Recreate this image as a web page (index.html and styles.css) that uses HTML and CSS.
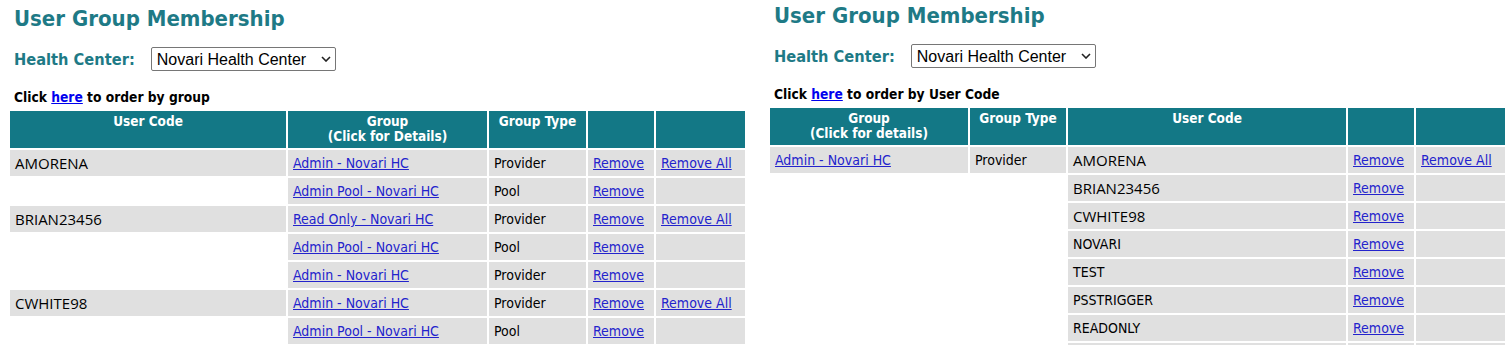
FILE: index.html
```html
<!DOCTYPE html>
<html lang="en">

<head>
    <meta charset="UTF-8">
    <title>User Group Membership</title>
    <link rel="stylesheet" href="styles.css">
</head>

<body>
    <div class="panels">
        <!-- ordered by user code -->
        <div class="panel panel-by-user">
            <h1>User Group Membership</h1>
            <div class="center-row">
                <label for="hc1">Health Center:</label>
                <span class="select-wrap">
                    <select id="hc1">
                        <option>Novari Health Center</option>
                    </select>
                    <svg class="chevron" width="10" height="6" viewBox="0 0 10 6"><path d="M1 1l4 4 4-4" fill="none" stroke="#222" stroke-width="1.6"/></svg>
                </span>
            </div>
            <p class="order-by">Click <a href="#">here</a> to order by group</p>
            <table class="members">
                <colgroup>
                    <col style="width: 276px">
                    <col style="width: 199px">
                    <col style="width: 97px">
                    <col style="width: 66px">
                    <col style="width: 89px">
                </colgroup>
                <tr>
                    <th>User Code</th>
                    <th>Group<br>(Click for Details)</th>
                    <th>Group Type</th>
                    <th></th>
                    <th></th>
                </tr>
                <tr>
                    <td class="code">AMORENA</td>
                    <td><a href="#">Admin - Novari HC</a></td>
                    <td>Provider</td>
                    <td><a href="#">Remove</a></td>
                    <td><a href="#">Remove All</a></td>
                </tr>
                <tr>
                    <td class="empty"></td>
                    <td><a href="#">Admin Pool - Novari HC</a></td>
                    <td>Pool</td>
                    <td><a href="#">Remove</a></td>
                    <td></td>
                </tr>
                <tr>
                    <td class="code">BRIAN23456</td>
                    <td><a href="#">Read Only - Novari HC</a></td>
                    <td>Provider</td>
                    <td><a href="#">Remove</a></td>
                    <td><a href="#">Remove All</a></td>
                </tr>
                <tr>
                    <td class="empty"></td>
                    <td><a href="#">Admin Pool - Novari HC</a></td>
                    <td>Pool</td>
                    <td><a href="#">Remove</a></td>
                    <td></td>
                </tr>
                <tr>
                    <td class="empty"></td>
                    <td><a href="#">Admin - Novari HC</a></td>
                    <td>Provider</td>
                    <td><a href="#">Remove</a></td>
                    <td></td>
                </tr>
                <tr>
                    <td class="code">CWHITE98</td>
                    <td><a href="#">Admin - Novari HC</a></td>
                    <td>Provider</td>
                    <td><a href="#">Remove</a></td>
                    <td><a href="#">Remove All</a></td>
                </tr>
                <tr>
                    <td class="empty"></td>
                    <td><a href="#">Admin Pool - Novari HC</a></td>
                    <td>Pool</td>
                    <td><a href="#">Remove</a></td>
                    <td></td>
                </tr>
            </table>
        </div>

        <!-- ordered by group -->
        <div class="panel">
            <h1>User Group Membership</h1>
            <div class="center-row">
                <label for="hc2">Health Center:</label>
                <span class="select-wrap">
                    <select id="hc2">
                        <option>Novari Health Center</option>
                    </select>
                    <svg class="chevron" width="10" height="6" viewBox="0 0 10 6"><path d="M1 1l4 4 4-4" fill="none" stroke="#222" stroke-width="1.6"/></svg>
                </span>
            </div>
            <p class="order-by">Click <a href="#">here</a> to order by User Code</p>
            <table class="members">
                <colgroup>
                    <col style="width: 198px">
                    <col style="width: 96px">
                    <col style="width: 278px">
                    <col style="width: 66px">
                    <col style="width: 89px">
                </colgroup>
                <tr>
                    <th>Group<br>(Click for details)</th>
                    <th>Group Type</th>
                    <th>User Code</th>
                    <th></th>
                    <th></th>
                </tr>
                <tr>
                    <td><a href="#">Admin - Novari HC</a></td>
                    <td>Provider</td>
                    <td class="code">AMORENA</td>
                    <td><a href="#">Remove</a></td>
                    <td><a href="#">Remove All</a></td>
                </tr>
                <tr>
                    <td class="empty"></td>
                    <td class="empty"></td>
                    <td class="code">BRIAN23456</td>
                    <td><a href="#">Remove</a></td>
                    <td></td>
                </tr>
                <tr>
                    <td class="empty"></td>
                    <td class="empty"></td>
                    <td class="code">CWHITE98</td>
                    <td><a href="#">Remove</a></td>
                    <td></td>
                </tr>
                <tr>
                    <td class="empty"></td>
                    <td class="empty"></td>
                    <td>NOVARI</td>
                    <td><a href="#">Remove</a></td>
                    <td></td>
                </tr>
                <tr>
                    <td class="empty"></td>
                    <td class="empty"></td>
                    <td>TEST</td>
                    <td><a href="#">Remove</a></td>
                    <td></td>
                </tr>
                <tr>
                    <td class="empty"></td>
                    <td class="empty"></td>
                    <td>PSSTRIGGER</td>
                    <td><a href="#">Remove</a></td>
                    <td></td>
                </tr>
                <tr>
                    <td class="empty"></td>
                    <td class="empty"></td>
                    <td>READONLY</td>
                    <td><a href="#">Remove</a></td>
                    <td></td>
                </tr>
                <tr>
                    <td class="empty"></td>
                    <td class="empty"></td>
                    <td></td>
                    <td></td>
                    <td></td>
                </tr>
            </table>
        </div>
    </div>
</body>

</html>
```

FILE: styles.css
```css
body {
    margin: 0;
    padding: 0 0 0 8px;
    background-color: #fff;
    color: #000;
    font-family: "DejaVu Sans Condensed", "DejaVu Sans", Tahoma, sans-serif;
    font-size: 14px;
}

.panels {
    display: flex;
    gap: 21px;
    align-items: flex-start;
}

.panel {
    width: 739px;
    flex-shrink: 0;
}

/* left copy sits a few pixels lower */
.panel-by-user {
    padding-top: 3px;
}

h1 {
    margin: 0;
    padding: 3px 0 0 6px;
    font-size: 22px;
    font-weight: bold;
    color: #1e7a86;
}

.center-row {
    display: flex;
    align-items: center;
    gap: 16px;
    padding-left: 6px;
    margin-top: 16px;
}

.center-row label {
    font-size: 16.3px;
    font-weight: bold;
    color: #1e7a86;
}

.select-wrap {
    position: relative;
    display: inline-flex;
}

.center-row select {
    appearance: none;
    width: 185px;
    height: 24px;
    font-family: "Liberation Sans", Arial, sans-serif;
    font-size: 16px;
    color: #000;
    background-color: #fff;
    border: 1px solid #767676;
    border-radius: 2px;
    padding: 0 20px 0 5px;
}

.chevron {
    position: absolute;
    right: 5px;
    top: 9px;
    pointer-events: none;
}

.order-by {
    margin: 18px 0 0 6px;
    font-size: 13.7px;
    font-weight: bold;
}

.order-by a {
    color: #0000ee;
}

.members {
    width: 739px;
    margin-top: 4px;
    border-collapse: separate;
    border-spacing: 2px;
    table-layout: fixed;
}

.members th {
    background-color: #137886;
    color: #fff;
    font-size: 13.5px;
    font-weight: bold;
    text-align: center;
    vertical-align: top;
    height: 37px;
    padding: 3px 4px 0;
    line-height: 15px;
    box-sizing: border-box;
}

.members td {
    background-color: #e0e0e0;
    height: 26px;
    padding: 0 5px;
    vertical-align: middle;
    white-space: nowrap;
    box-sizing: border-box;
}

.members td a {
    color: #2323cc;
}

.members td.code {
    font-family: "Open Sans", sans-serif;
    font-size: 15px;
}

.members td.empty {
    background-color: transparent;
}
```
